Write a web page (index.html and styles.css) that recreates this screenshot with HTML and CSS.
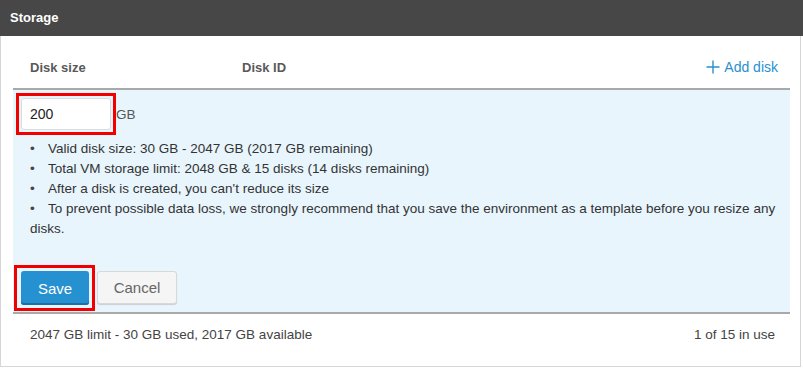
FILE: index.html
```html
<!DOCTYPE html>
<html lang="en">
<head>
    <meta charset="UTF-8">
    <title>Storage</title>
    <link rel="stylesheet" href="styles.css">
</head>
<body>
    <div class="panel-title">Storage</div>
    <div class="panel">
        <div class="disk-head">
            <span class="col-size">Disk size</span>
            <span class="col-id">Disk ID</span>
            <a class="add-disk" href="#">
                <svg width="14" height="14" viewBox="0 0 14 14"><path d="M7 0.5V13.5M0.5 7H13.5" stroke="#2a8fd0" stroke-width="1.4" fill="none"/></svg>
                Add disk
            </a>
        </div>

        <div class="disk-edit">
            <div class="size-row">
                <span class="hl hl-input"><input type="text" value="200"></span>
                <span class="unit">GB</span>
            </div>

            <ul class="notes">
                <li>Valid disk size: 30 GB - 2047 GB (2017 GB remaining)</li>
                <li>Total VM storage limit: 2048 GB &amp; 15 disks (14 disks remaining)</li>
                <li>After a disk is created, you can't reduce its size</li>
                <li>To prevent possible data loss, we strongly recommend that you save the environment as a template before you resize any disks.</li>
            </ul>

            <div class="actions">
                <span class="hl hl-btn"><button class="btn-save">Save</button></span>
                <button class="btn-cancel">Cancel</button>
            </div>
        </div>

        <div class="disk-foot">
            <span>2047 GB limit - 30 GB used, 2017 GB available</span>
            <span>1 of 15 in use</span>
        </div>
    </div>
</body>
</html>
```

FILE: styles.css
```css
body {
    margin: 0;
    font-family: "Liberation Sans", Arial, sans-serif;
    font-size: 13.5px;
    color: #333;
    background-color: white;
}
.panel-title {
    background-color: #474747;
    color: white;
    font-weight: bold;
    font-size: 13px;
    height: 36px;
    line-height: 35px;
    padding-left: 10px;
    box-sizing: border-box;
}
.panel {
    width: 801px;
    height: 331px;
    box-sizing: border-box;
    border: 1px solid #d6d6d6;
    border-top: none;
    padding: 0 10px 0 12px;
}
.disk-head {
    display: flex;
    align-items: center;
    height: 54px;
    padding: 10px 12px 0 17px;
    box-sizing: border-box;
    border-bottom: 2px solid #a9a9a9;
    font-weight: bold;
    font-size: 13px;
    color: #595959;
}
.col-size {
    width: 212px;
}
.col-id {
    flex: 1;
}
.add-disk {
    display: flex;
    align-items: center;
    gap: 4px;
    color: #2a8fd0;
    font-weight: normal;
    font-size: 14px;
    text-decoration: none;
}
.disk-edit {
    background-color: #e8f5fd;
    height: 224px;
    box-sizing: border-box;
    padding: 3px 0 1px 0;
    display: flex;
    flex-direction: column;
    border-bottom: 2px solid #a9a9a9;
}
.size-row {
    display: flex;
    align-items: center;
    padding-left: 3px;
}
.hl {
    display: inline-block;
    border: 3px solid #f20000;
}
.hl-input {
    padding: 2px;
}
.hl-input input {
    width: 90px;
    height: 32px;
    box-sizing: border-box;
    border: 1px solid #dcdcdc;
    border-radius: 3px;
    padding: 0 8px;
    font-family: "Liberation Sans", Arial, sans-serif;
    font-size: 14px;
    color: #222;
    background: white;
}
.unit {
    color: #555;
}
.notes {
    list-style: none;
    margin: 4px 0 0 0;
    padding: 0 12px 0 17px;
    line-height: 20px;
}
.notes li::before {
    content: "\2022";
    display: inline-block;
    width: 18px;
    color: #444;
}
.actions {
    margin-top: auto;
    display: flex;
    align-items: flex-start;
    gap: 2px;
    padding-left: 1px;
}
.hl-btn {
    padding: 3px 3px 3px 4px;
}
.btn-save {
    display: block;
    width: 68px;
    height: 34px;
    border: none;
    border-radius: 3px;
    background-color: #2591d0;
    box-shadow: inset 0 -2px 0 #1b6ea6;
    color: white;
    font-family: "Liberation Sans", Arial, sans-serif;
    font-size: 15px;
    cursor: pointer;
}
.btn-cancel {
    margin-top: 6px;
    width: 80px;
    height: 33px;
    border: 1px solid #d8d8d8;
    border-radius: 3px;
    background-color: #f5f5f5;
    box-shadow: 0 1px 1px #cfcfcf;
    color: #666;
    font-family: "Liberation Sans", Arial, sans-serif;
    font-size: 15px;
    cursor: pointer;
}
.disk-foot {
    display: flex;
    justify-content: space-between;
    padding: 13px 15px 0 17px;
    color: #444;
}
```
